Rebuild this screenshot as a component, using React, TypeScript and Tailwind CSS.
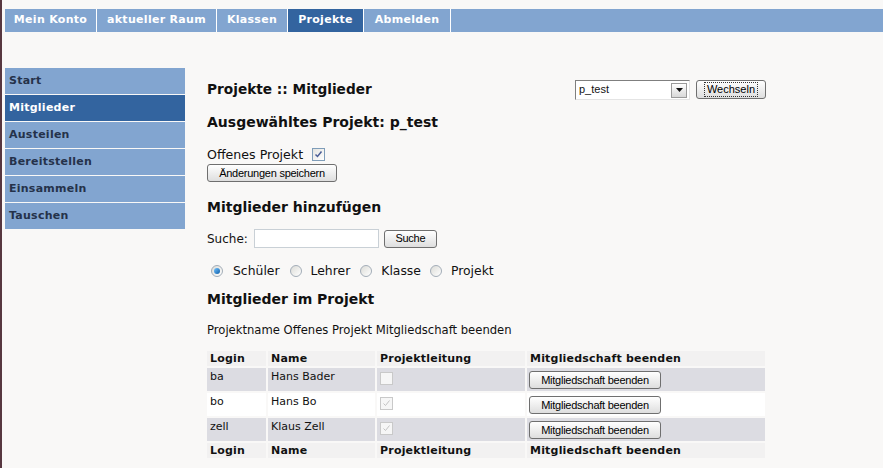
import React from 'react'

const topNav = [
  { label: 'Mein Konto', w: 'w-[92px]' },
  { label: 'aktueller Raum', w: 'w-[120px]' },
  { label: 'Klassen', w: 'w-[71px]' },
  { label: 'Projekte', w: 'w-[76px]' },
  { label: 'Abmelden', w: 'w-[87px]' },
]
const sideNav = ['Start', 'Mitglieder', 'Austeilen', 'Bereitstellen', 'Einsammeln', 'Tauschen']

const members = [
  { login: 'ba', name: 'Hans Bader', lead: false, bg: 'bg-[#dcdce2]' },
  { login: 'bo', name: 'Hans Bo', lead: true, bg: 'bg-white' },
  { login: 'zell', name: 'Klaus Zell', lead: true, bg: 'bg-[#dcdce2]' },
]

// old windows style push button
const WinButton = ({ label, className = '' }: { label: string; className?: string }) => (
  <button
    className={`h-[18px] rounded-[3px] border border-[#6f6f6f] bg-gradient-to-b from-[#ffffff] to-[#dedede] text-[11px] tracking-[-0.25px] leading-none text-black ${className}`}
    style={{ fontFamily: '"Liberation Sans", Arial, sans-serif' }}
  >
    {label}
  </button>
)

const Check = ({ checked, disabled }: { checked: boolean; disabled?: boolean }) => (
  <span
    className={`inline-flex h-[13px] w-[13px] items-center justify-center border ${
      disabled ? 'border-[#c9c9c9] bg-[#f6f6f6]' : 'border-[#7f9db9] bg-gradient-to-br from-[#e4e4e0] to-white'
    }`}
  >
    {checked && (
      <svg width="9" height="9" viewBox="0 0 9 9">
        <path
          d="M1.5 4.5 L3.5 6.5 L7.5 1.5"
          fill="none"
          stroke={disabled ? '#c3c3c3' : '#4a5d96'}
          strokeWidth={disabled ? 1 : 1.5}
        />
      </svg>
    )}
  </span>
)

const Radio = ({ on }: { on?: boolean }) => (
  <span className="inline-flex h-[12px] w-[12px] items-center justify-center rounded-full border border-[#a3adb8] bg-gradient-to-br from-[#dcdcd7] to-white">
    {on && <span className="h-[6px] w-[6px] rounded-full bg-gradient-to-br from-[#6fc2ff] to-[#0a5fa8]" />}
  </span>
)

export default function App() {
  return (
    <div
      className="h-[468px] w-[883px] overflow-hidden border-l-2 border-[#573740] bg-[#f9f8f7] text-[#111]"
      style={{ fontFamily: '"DejaVu Sans", Verdana, sans-serif' }}
    >
      <div className="ml-[3px] mt-[9px] flex h-[23px] bg-[#82a5d0]">
        {topNav.map((t) => (
          <div
            key={t.label}
            className={`flex items-center justify-center border-r border-white text-[11px] font-bold tracking-[0.3px] text-white ${t.w} ${
              t.label === 'Projekte' ? 'bg-[#33649f]' : ''
            }`}
          >
            {t.label}
          </div>
        ))}
      </div>

      <div className="ml-[3px] flex">
        <div className="mt-[36px] flex w-[180px] flex-col gap-px">
          {sideNav.map((t) => (
            <div
              key={t}
              className={`flex h-[26px] items-center px-[4px] text-[11px] font-bold tracking-[0.25px] ${
                t === 'Mitglieder' ? 'bg-[#33649f] text-white' : 'bg-[#82a5d0] text-[#25324a]'
              }`}
            >
              {t}
            </div>
          ))}
        </div>

        <div className="ml-[22px] mt-[47px] w-[558px]">
          <div className="flex h-[21px] items-center">
            <h1 className="text-[13.7px] font-bold">Projekte :: Mitglieder</h1>
            <div className="ml-auto mr-[-1px] flex items-center">
              <div
                className="relative flex h-[20px] w-[115px] items-center border border-[#7f7f7f] border-b-[#e4e4e4] border-r-[#e4e4e4] bg-white pl-[3px] text-[11px]"
                style={{ fontFamily: '"Liberation Sans", Arial, sans-serif' }}
              >
                p_test
                <span className="absolute right-[2px] top-[2px] flex h-[15px] w-[16px] items-center justify-center border border-[#9a9a9a] bg-gradient-to-b from-white to-[#d8d8d8]">
                  <svg width="7" height="4" viewBox="0 0 7 4">
                    <path d="M0 0 H7 L3.5 4 Z" fill="#111" />
                  </svg>
                </span>
              </div>
              <button
                className="ml-[6px] flex h-[19px] w-[70px] items-center justify-center rounded-[3px] border border-[#6f6f6f] bg-gradient-to-b from-white to-[#dedede] text-[11px] text-black"
                style={{ fontFamily: '"Liberation Sans", Arial, sans-serif' }}
              >
                <span className="border border-dotted border-[#333] px-[2px] leading-[13px]">Wechseln</span>
              </button>
            </div>
          </div>

          <h2 className="mt-[14px] text-[14px] font-bold leading-[16px]">Ausgewähltes Projekt: p_test</h2>

          <div className="mt-[17px] flex items-center text-[12.6px] leading-[16px]">
            Offenes Projekt
            <span className="ml-[9px]">
              <Check checked />
            </span>
          </div>
          <WinButton label="Änderungen speichern" className="mt-[1px] block w-[130px]" />

          <h2 className="mt-[17px] text-[14px] font-bold leading-[16px]">Mitglieder hinzufügen</h2>

          <div className="mt-[14px] flex h-[19px] items-center text-[12px]">
            Suche:
            <span className="ml-[6px] h-[19px] w-[125px] border border-[#c9d0d6] bg-white" />
            <WinButton label="Suche" className="ml-[5px] w-[53px]" />
          </div>

          <div className="mt-[15px] flex items-center text-[12.4px] leading-[16px]">
            <span className="ml-[4px] mr-[10px] flex"><Radio on /></span>Schüler
            <span className="ml-[10px] mr-[9px] flex"><Radio /></span>Lehrer
            <span className="ml-[10px] mr-[9px] flex"><Radio /></span>Klasse
            <span className="ml-[9px] mr-[9px] flex"><Radio /></span>Projekt
          </div>

          <h2 className="mt-[12px] text-[14px] font-bold leading-[16px]">Mitglieder im Projekt</h2>

          <p className="mt-[15px] text-[11.6px] leading-[16px]">Projektname Offenes Projekt Mitgliedschaft beenden</p>

          <table className="-ml-[2px] mt-[11px] w-[562px] border-separate border-spacing-[2px] text-left text-[11px]">
            <thead>
              <tr className="bg-[#f2f1f1] tracking-[0.2px]">
                <th className="h-[15px] w-[59px] px-[3px] py-0 leading-[15px]">Login</th>
                <th className="w-[107px] px-[3px] py-0 leading-[15px]">Name</th>
                <th className="w-[148px] px-[3px] py-0 leading-[15px]">Projektleitung</th>
                <th className="px-[3px] py-0 leading-[15px]">Mitgliedschaft beenden</th>
              </tr>
            </thead>
            <tbody>
              {members.map((m) => (
                <tr key={m.login} className={m.bg}>
                  <td className="h-[23px] px-[3px] pt-[1px] align-top leading-[15px]">{m.login}</td>
                  <td className="px-[3px] pt-[1px] align-top leading-[15px]">{m.name}</td>
                  <td className="px-[3px] pt-[4px] align-top leading-none">
                    <Check checked={m.lead} disabled />
                  </td>
                  <td className="px-[2px] pt-[3px] align-top">
                    <WinButton label="Mitgliedschaft beenden" className="block w-[132px]" />
                  </td>
                </tr>
              ))}
              <tr className="bg-[#f2f1f1] font-bold tracking-[0.2px]">
                <td className="h-[15px] px-[3px] leading-[15px]">Login</td>
                <td className="px-[3px] leading-[15px]">Name</td>
                <td className="px-[3px] leading-[15px]">Projektleitung</td>
                <td className="px-[3px] leading-[15px]">Mitgliedschaft beenden</td>
              </tr>
            </tbody>
          </table>
        </div>
      </div>
    </div>
  )
}
